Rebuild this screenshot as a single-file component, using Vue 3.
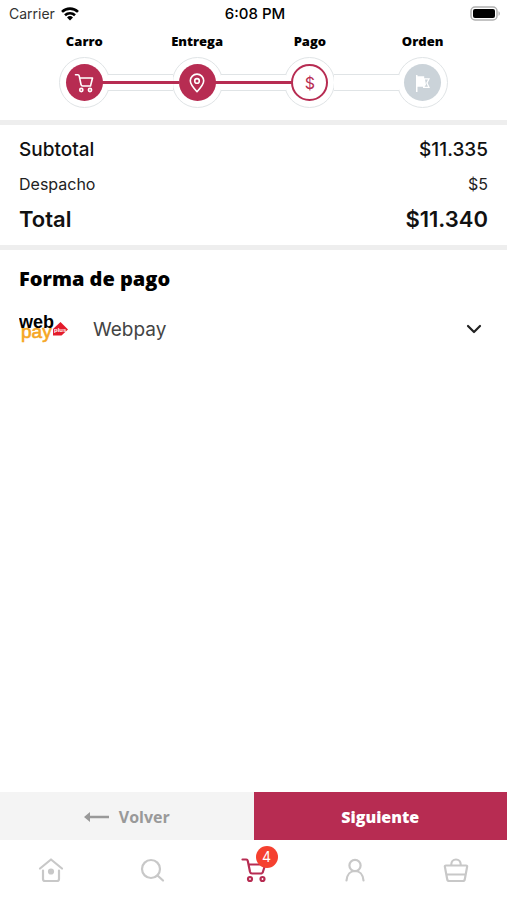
<template>
    <div class="screen">
        <div class="status">
            <div class="carrier">
                <span>Carrier</span>
                <svg width="18" height="14" viewBox="0 0 18 14" fill="none" stroke="#000" stroke-width="2.6">
                    <path d="M1 4.9a11.4 11.4 0 0 1 16 0" />
                    <path d="M4 8.3a7.2 7.2 0 0 1 10 0" />
                    <path d="M9 13.6l-3-3.2a4.3 4.3 0 0 1 6 0z" fill="#000" stroke="none" />
                </svg>
            </div>
            <span class="clock">6:08 PM</span>
            <svg class="battery" width="31" height="16" viewBox="0 0 31 16">
                <rect x="1" y="1" width="26" height="13" rx="4" fill="#fff" stroke="#b0b0b0" stroke-width="1.5" />
                <rect x="3" y="3" width="22" height="9" rx="2" />
                <path d="M28.5 5.2c1.8.6 1.8 4 0 4.6z" fill="#b0b0b0" />
            </svg>
        </div>

        <!-- Checkout steps -->
        <ol class="steps">
            <li v-for="step in steps" :key="step.name" class="step" :class="step.state">
                <span class="step-name">{{ step.name }}</span>
                <div class="ring">
                    <div class="dot">
                        <svg v-if="step.name === 'Carro'" width="20" height="20" viewBox="0 0 20 20" fill="none" stroke="currentColor" stroke-width="1.6" stroke-linecap="round" stroke-linejoin="round">
                            <path d="M1.5 1.8h2.4c.8 0 1.100.3 1.300 1.100l1.800 8.600c.2 1 .8 1.500 1.700 1.500h7.500M5.800 5h12.700l-2 8" />
                            <circle cx="7.300" cy="17" r="1.600" />
                            <circle cx="16" cy="17" r="1.600" />
                        </svg>
                        <svg v-else-if="step.name === 'Entrega'" width="20" height="20" viewBox="0 0 20 20" fill="none" stroke="currentColor" stroke-width="1.6" stroke-linejoin="round">
                            <path d="M10 18.7C6 14.5 3.3 11.2 3.3 7.8a6.7 6.7 0 0 1 13.4 0c0 3.4-2.7 6.7-6.7 10.9z" />
                            <circle cx="10" cy="7.9" r="2.3" />
                        </svg>
                        <span v-else-if="step.name === 'Pago'" class="money">$</span>
                        <svg v-else width="20" height="20" viewBox="0 0 20 20" fill="currentColor">
                            <path d="M3 2h1.500v1.200h6.700v2H17l-2.400 4.800 2.400 5H10v-1.300H4.500V19H3z" />
                            <path d="M12 6.500h3l-1.800 3.500 1.800 3.700h-3.500l1.500-2z" fill="#cbd3d9" />
                        </svg>
                    </div>
                </div>
            </li>
        </ol>

        <dl class="totals">
            <div class="line subtotal">
                <dt>Subtotal</dt>
                <dd>$11.335</dd>
            </div>
            <div class="line shipping">
                <dt>Despacho</dt>
                <dd>$5</dd>
            </div>
            <div class="line total">
                <dt>Total</dt>
                <dd>$11.340</dd>
            </div>
        </dl>

        <section class="payment">
            <h2>Forma de pago</h2>
            <button class="method" type="button" :aria-expanded="open" @click="open = !open">
                <svg class="logo" width="50" height="32" viewBox="0 0 50 32">
                    <text class="logo-pay" x="2" y="25">pay</text>
                    <text class="logo-web" x="0" y="15">web</text>
                    <path d="M34 16l7.500-7 7.500 7.500-6.500 6H34z" fill="#e31b2b" />
                    <text class="logo-plus" x="35" y="19">plus</text>
                </svg>
                <span>Webpay</span>
                <svg class="chevron" width="16" height="10" viewBox="0 0 16 10" fill="none" stroke="#222" stroke-width="2.2" stroke-linecap="round" stroke-linejoin="round">
                    <path d="M2 2l6 6 6-6" />
                </svg>
            </button>
        </section>

        <div class="actions">
            <button class="back" type="button">
                <svg width="26" height="12" viewBox="0 0 26 12">
                    <path d="M0 6L6 1v3.700h19v2.500H6V11z" fill="#999" />
                </svg>
                Volver
            </button>
            <button class="next" type="button">Siguiente</button>
        </div>

        <nav class="tabs">
            <a href="#" aria-label="Inicio">
                <svg width="26" height="26" viewBox="0 0 26 26">
                    <path d="M2 11.5L13 2.5l11 9M5 13.5V22a2 2 0 0 0 2 2h12a2 2 0 0 0 2-2v-8.500" />
                    <circle cx="13" cy="14.500" r="2" fill="currentColor" />
                </svg>
            </a>
            <a href="#" aria-label="Buscar">
                <svg width="26" height="26" viewBox="0 0 26 26">
                    <circle cx="12" cy="12" r="9" />
                    <path d="M18.500 18.500L24 23.500" />
                </svg>
            </a>
            <a href="#" class="active" aria-label="Carro">
                <svg width="26" height="26" viewBox="0 0 26 26">
                    <path d="M1.500 2.500h3.800c1 0 1.300.5 1.500 1.400l2.200 10.800c.3 1.300 1 1.800 2 1.800h9.500M7.500 7.500h16.800l-2.600 8" />
                    <circle cx="9" cy="22" r="2" />
                    <circle cx="21.500" cy="22" r="2" />
                </svg>
                <span class="badge">{{ cartCount }}</span>
            </a>
            <a href="#" aria-label="Cuenta">
                <svg width="26" height="26" viewBox="0 0 26 26">
                    <circle cx="13" cy="8.500" r="5.600" />
                    <path d="M4.500 23.500c.5-6 4-9.500 8.500-9.500s8 3.500 8.500 9.500" />
                </svg>
            </a>
            <a href="#" aria-label="Pedidos">
                <svg width="26" height="26" viewBox="0 0 26 26">
                    <path d="M3 8.500h20c1 0 1.300.6 1.100 1.400l-2.300 12.300c-.2 1.200-.8 1.800-2 1.800H6.200c-1.200 0-1.800-.6-2-1.800L1.900 9.900C1.700 9.100 2 8.500 3 8.500zM4 17.500h18M8.200 8c0-3.300 2-5.500 4.800-5.500s4.800 2.200 4.800 5.500" />
                </svg>
            </a>
        </nav>
    </div>
</template>

<script setup>
import { ref } from 'vue'

const steps = [
    { name: 'Carro', state: 'done' },
    { name: 'Entrega', state: 'done' },
    { name: 'Pago', state: 'current' },
    { name: 'Orden', state: 'pending' },
]

const cartCount = ref(4)
const open = ref(false)
</script>

<style>
body {
    margin: 0;
    background: #fff;
}
</style>

<style scoped>
.screen {
    display: flex;
    flex-direction: column;
    min-height: 100vh;
    font-family: Inter, "Liberation Sans", sans-serif;
    color: #111;
}

button {
    border: 0;
    padding: 0;
    background: none;
    font-family: inherit;
    cursor: pointer;
}

.status {
    display: grid;
    grid-template-columns: 1fr auto 1fr;
    align-items: center;
    height: 27px;
    padding: 0 6px 0 9px;
    font-size: 14px;
}

.carrier {
    display: flex;
    align-items: center;
    gap: 6px;
    color: #333;
}

.clock {
    font-size: 15px;
    font-weight: 500;
    color: #000;
}

.battery {
    justify-self: end;
}

.steps {
    display: flex;
    margin: 0 28px;
    padding: 5px 0 12px;
    list-style: none;
}

.step {
    position: relative;
    flex: 1;
    display: flex;
    flex-direction: column;
    align-items: center;
    gap: 7px;
}

.step-name {
    font: 800 13px/18px "Open Sans", sans-serif;
    color: #000;
}

.ring {
    display: flex;
    align-items: center;
    justify-content: center;
    box-sizing: border-box;
    width: 51px;
    height: 51px;
    border: 1px solid #e0e4e6;
    border-radius: 50%;
}

/* channel that joins two rings */
.step:not(:last-child)::before {
    content: "";
    position: absolute;
    z-index: 1;
    bottom: 17px;
    left: calc(50% + 24px);
    width: calc(100% - 48px);
    height: 15px;
    border: solid #e0e4e6;
    border-width: 1px 0;
    background: #fff;
}

.step.done::after {
    content: "";
    position: absolute;
    z-index: 2;
    bottom: 24px;
    left: calc(50% + 18px);
    width: calc(100% - 36px);
    height: 3px;
    background: #b72c52;
}

.dot {
    display: flex;
    align-items: center;
    justify-content: center;
    box-sizing: border-box;
    width: 37px;
    height: 37px;
    border-radius: 50%;
    color: #fff;
    background: #b72c52;
}

.current .dot {
    border: 2px solid #b72c52;
    background: #fff;
    color: #b72c52;
}

.pending .dot {
    background: #cbd3d9;
}

.money {
    font-size: 16px;
}

.totals {
    margin: 0;
    padding: 8px 19px;
    border: solid #eee;
    border-width: 5px 0;
}

.line {
    display: flex;
    justify-content: space-between;
    align-items: center;
}

.line dd {
    margin: 0;
}

.subtotal {
    font-size: 19px;
    font-weight: 500;
    line-height: 34px;
}

.shipping {
    font-size: 16px;
    line-height: 34px;
    color: #222;
}

.total {
    font-size: 22px;
    font-weight: 600;
    line-height: 36px;
}

.payment {
    flex: 1;
    padding: 14px 19px;
}

.payment h2 {
    margin: 0;
    font: 800 20px/30px "Open Sans", sans-serif;
    color: #000;
}

.method {
    display: flex;
    align-items: center;
    width: 100%;
    margin-top: 12px;
    padding-right: 6px;
    gap: 24px;
    height: 46px;
    font-size: 19px;
    color: #444;
}

.chevron {
    margin-left: auto;
}

.logo text {
    font-family: "Liberation Sans", sans-serif;
}

.logo .logo-web {
    font-size: 18px;
    font-weight: 700;
}

.logo .logo-pay {
    font-size: 19px;
    fill: #f5a623;
    stroke: #f5a623;
    stroke-width: .6;
}

.logo .logo-plus {
    font-size: 6px;
    font-weight: 700;
    fill: #fff;
}

.actions {
    display: flex;
    height: 48px;
}

.actions button {
    flex: 1;
    display: flex;
    align-items: center;
    justify-content: center;
    gap: 9px;
    padding-top: 2px;
    font: 800 16px/24px "Open Sans", sans-serif;
}

.actions .back {
    background: #f4f4f4;
    color: #999;
    font-weight: 700;
}

.actions .next {
    background: #b72c52;
    color: #fff;
}

.tabs {
    display: flex;
    height: 60px;
}

.tabs a {
    position: relative;
    flex: 1;
    display: flex;
    align-items: center;
    justify-content: center;
    color: #c8c8c8;
}

.tabs svg {
    fill: none;
    stroke: currentColor;
    stroke-width: 2.2;
    stroke-linecap: round;
    stroke-linejoin: round;
}

.tabs .active {
    color: #b72c52;
}

.badge {
    position: absolute;
    top: 6px;
    left: calc(50% + 2px);
    width: 22px;
    border-radius: 50%;
    background: #f5402f;
    color: #fff;
    font-size: 14px;
    line-height: 22px;
    text-align: center;
}
</style>
